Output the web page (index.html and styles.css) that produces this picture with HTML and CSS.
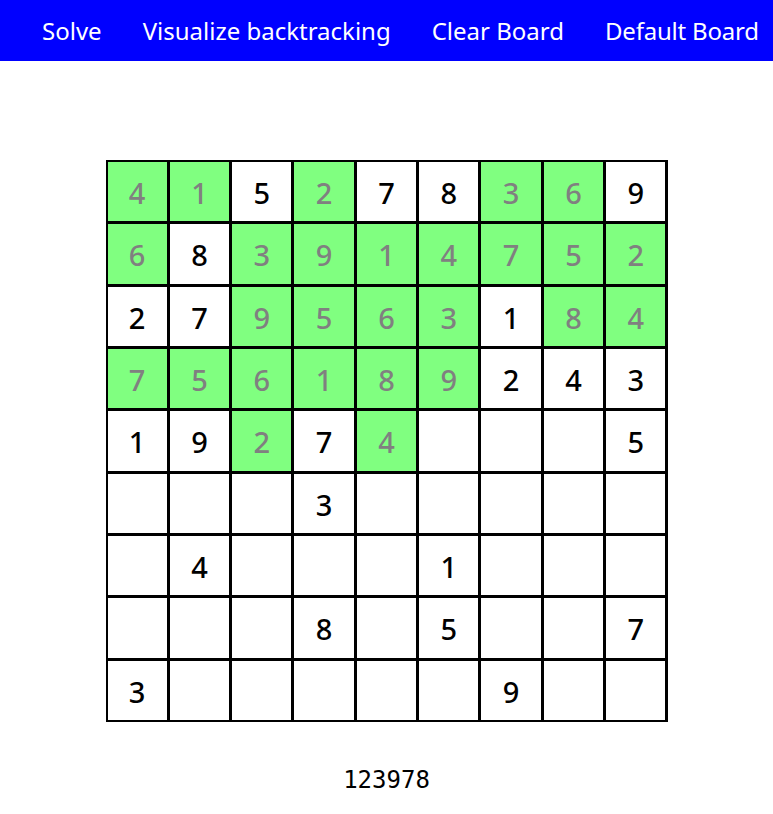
FILE: index.html
```html
<!DOCTYPE html>
<html>
<head>
<meta charset="utf-8">
<link rel="stylesheet" href="styles.css">
</head>
<body>
<nav class="navbar">
  <a class="nav-item">Solve</a>
  <a class="nav-item">Visualize backtracking</a>
  <a class="nav-item">Clear Board</a>
  <a class="nav-item">Default Board</a>
</nav>
<main class="main">
  <div class="board">
    <div class="cell solved">4</div><div class="cell solved">1</div><div class="cell">5</div><div class="cell solved">2</div><div class="cell">7</div><div class="cell">8</div><div class="cell solved">3</div><div class="cell solved">6</div><div class="cell">9</div>
    <div class="cell solved">6</div><div class="cell">8</div><div class="cell solved">3</div><div class="cell solved">9</div><div class="cell solved">1</div><div class="cell solved">4</div><div class="cell solved">7</div><div class="cell solved">5</div><div class="cell solved">2</div>
    <div class="cell">2</div><div class="cell">7</div><div class="cell solved">9</div><div class="cell solved">5</div><div class="cell solved">6</div><div class="cell solved">3</div><div class="cell">1</div><div class="cell solved">8</div><div class="cell solved">4</div>
    <div class="cell solved">7</div><div class="cell solved">5</div><div class="cell solved">6</div><div class="cell solved">1</div><div class="cell solved">8</div><div class="cell solved">9</div><div class="cell">2</div><div class="cell">4</div><div class="cell">3</div>
    <div class="cell">1</div><div class="cell">9</div><div class="cell solved">2</div><div class="cell">7</div><div class="cell solved">4</div><div class="cell"></div><div class="cell"></div><div class="cell"></div><div class="cell">5</div>
    <div class="cell"></div><div class="cell"></div><div class="cell"></div><div class="cell">3</div><div class="cell"></div><div class="cell"></div><div class="cell"></div><div class="cell"></div><div class="cell"></div>
    <div class="cell"></div><div class="cell">4</div><div class="cell"></div><div class="cell"></div><div class="cell"></div><div class="cell">1</div><div class="cell"></div><div class="cell"></div><div class="cell"></div>
    <div class="cell"></div><div class="cell"></div><div class="cell"></div><div class="cell">8</div><div class="cell"></div><div class="cell">5</div><div class="cell"></div><div class="cell"></div><div class="cell">7</div>
    <div class="cell">3</div><div class="cell"></div><div class="cell"></div><div class="cell"></div><div class="cell"></div><div class="cell"></div><div class="cell">9</div><div class="cell"></div><div class="cell"></div>
  </div>
  <p class="status">123978</p>
</main>
</body>
</html>
```

FILE: styles.css
```css
* { box-sizing: border-box; }
html, body { margin: 0; padding: 0; background: #fff; }
body { font-family: "Noto Sans", "Open Sans", sans-serif; overflow: hidden; }

.navbar {
  display: flex;
  align-items: center;
  gap: 41px;
  height: 61px;
  padding-left: 42px;
  background: #0000ff;
  white-space: nowrap;
}
.nav-item {
  color: #fff;
  font-size: 24px;
  line-height: 1;
  padding-top: 1px;
}
.nav-item:last-child { letter-spacing: -0.2px; }

.main {
  display: flex;
  flex-direction: column;
  align-items: center;
  padding-top: 99px;
}

.board {
  width: 562px;
  height: 562px;
  display: grid;
  grid-template-columns: repeat(9, 1fr);
  grid-template-rows: repeat(9, 1fr);
  gap: 3px;
  border: 2px solid #000;
  background: #000;
}
.cell {
  background: #fff;
  color: #000;
  display: flex;
  align-items: center;
  justify-content: center;
  font-size: 29px;
  font-weight: 530;
  line-height: 1;
  padding-top: 2px;
}
.cell.solved {
  background: #80ff80;
  color: #808080;
}

.status {
  margin: 44px 0 0;
  font-family: "DejaVu Sans Mono", "Liberation Mono", monospace;
  font-size: 24px;
  color: #000;
}
```
